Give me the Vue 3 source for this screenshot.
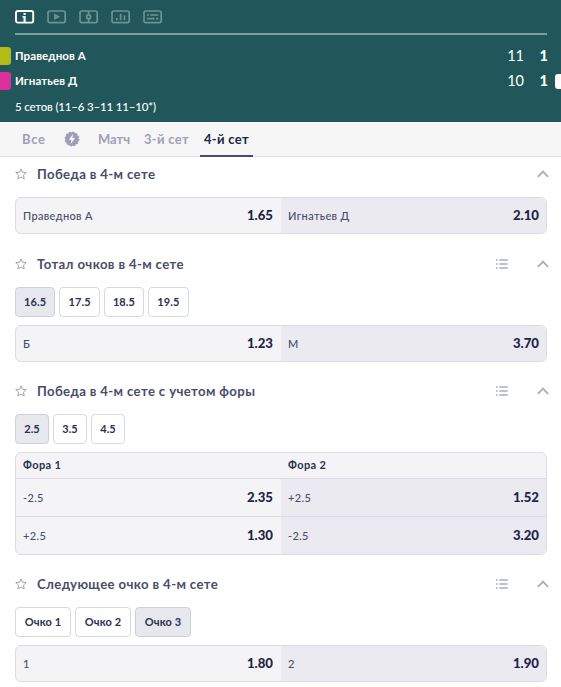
<template>
  <div class="page">
    <header class="board">
      <nav class="views">
        <svg class="view active" viewBox="0 0 20 14">
          <rect x="1" y="1" width="17.2" height="11.6" rx="1.8" />
          <path class="solid" d="M8.5 3h2.2v2.1H8.5zM7.5 6h3.2v6H8.5V7.6h-1z" />
        </svg>
        <svg class="view" viewBox="0 0 20 14">
          <rect x="1" y="1" width="17.2" height="11.6" rx="1.8" />
          <path class="solid" d="M7.1 3.5l6 3.3-6 3.3z" />
        </svg>
        <svg class="view" viewBox="0 0 20 14">
          <rect x="1" y="1" width="17.2" height="11.6" rx="1.8" />
          <circle cx="9.6" cy="6.8" r="2" />
          <path d="M9.6 1v3.8M9.6 8.8v3.8" />
        </svg>
        <svg class="view" viewBox="0 0 20 14">
          <rect x="1" y="1" width="17.2" height="11.6" rx="1.8" />
          <path d="M5.8 8v2.2M9.6 3.8v6.4M13.5 5.6v4.6" />
        </svg>
        <svg class="view" viewBox="0 0 20 14">
          <rect x="1" y="1" width="17.2" height="11.6" rx="1.8" />
          <path d="M4 5h2M7.2 5h8M4 8.6h7.5M13 8.6h2.4" />
        </svg>
      </nav>
      <div v-for="player in players" :key="player.name" class="player">
        <i class="shirt" :class="player.shirt"></i>
        <span class="player-name">{{ player.name }}</span>
        <span class="points">{{ player.points }}</span>
        <b class="sets">{{ player.sets }}</b>
        <i v-if="player.serving" class="serve"></i>
      </div>
      <p class="summary">5 сетов (11–6 3–11 11–10*)</p>
    </header>

    <nav class="tabs">
      <a class="tab all">Все</a>
      <a class="tab fast">
        <svg viewBox="0 0 16 16" width="16" height="16">
          <circle cx="8" cy="8" r="6.7" fill="#9c9eba" />
          <circle cx="8" cy="8" r="6.8" fill="none" stroke="#9c9eba" stroke-width="1.3" stroke-dasharray="2.2 1.36" />
          <path d="M9 2.9L4.8 8.8h2.5l-.5 4.3 4.3-6H8.4z" fill="#f6f6f7" />
        </svg>
      </a>
      <a class="tab match">Матч</a>
      <a class="tab third">3-й сет</a>
      <a class="tab current">4-й сет</a>
    </nav>

    <main>
      <section v-for="market in markets" :key="market.title" class="market">
        <div class="market-head">
          <svg class="star" viewBox="0 0 12 12">
            <path d="M6 .9l1.5 3.3 3.7.4-2.7 2.5.7 3.7L6 9l-3.2 1.8.7-3.7L.8 4.6l3.7-.4z" />
          </svg>
          <h2>{{ market.title }}</h2>
          <svg v-if="market.options" class="list" viewBox="0 0 12 10">
            <path d="M0 1h1.7M3.3 1h8.5M0 5h1.7M3.3 5h8.5M0 9h1.7M3.3 9h8.5" />
          </svg>
          <svg class="chevron" viewBox="0 0 12 8">
            <path d="M.9 6.8L6 1.7l5.1 5.1" />
          </svg>
        </div>
        <div v-if="market.options" class="options" :class="market.kind">
          <button
            v-for="option in market.options"
            :key="option"
            class="option"
            :class="{ selected: option === market.selected }"
          >{{ option }}</button>
        </div>
        <div class="table">
          <div v-if="market.columns" class="columns">
            <span v-for="column in market.columns" :key="column">{{ column }}</span>
          </div>
          <div v-for="(row, index) in market.rows" :key="index" class="row">
            <div v-for="bet in row" :key="bet.label" class="bet">
              <span class="label">{{ bet.label }}</span>
              <b class="odds">{{ bet.odds }}</b>
            </div>
          </div>
        </div>
      </section>
    </main>
  </div>
</template>

<script setup>
const players = [
  { name: "Праведнов А", points: 11, sets: 1, shirt: "olive" },
  { name: "Игнатьев Д", points: 10, sets: 1, shirt: "pink", serving: true },
];

const markets = [
  {
    title: "Победа в 4-м сете",
    kind: "winner",
    rows: [
      [
        { label: "Праведнов А", odds: "1.65" },
        { label: "Игнатьев Д", odds: "2.10" },
      ],
    ],
  },
  {
    title: "Тотал очков в 4-м сете",
    kind: "total",
    options: ["16.5", "17.5", "18.5", "19.5"],
    selected: "16.5",
    rows: [
      [
        { label: "Б", odds: "1.23" },
        { label: "М", odds: "3.70" },
      ],
    ],
  },
  {
    title: "Победа в 4-м сете с учетом форы",
    kind: "handicap",
    options: ["2.5", "3.5", "4.5"],
    selected: "2.5",
    columns: ["Фора 1", "Фора 2"],
    rows: [
      [
        { label: "-2.5", odds: "2.35" },
        { label: "+2.5", odds: "1.52" },
      ],
      [
        { label: "+2.5", odds: "1.30" },
        { label: "-2.5", odds: "3.20" },
      ],
    ],
  },
  {
    title: "Следующее очко в 4-м сете",
    kind: "point",
    options: ["Очко 1", "Очко 2", "Очко 3"],
    selected: "Очко 3",
    rows: [
      [
        { label: "1", odds: "1.80" },
        { label: "2", odds: "1.90" },
      ],
    ],
  },
];
</script>

<style>
body {
  background: #fff;
}
</style>

<style scoped>
.page {
  height: 687px;
  overflow: hidden;
  font-family: Lato, Inter, "Liberation Sans", sans-serif;
  color: #1f2445;
}

.page * {
  box-sizing: border-box;
}

.board {
  height: 122px;
  background: #21575a;
  color: #fff;
  overflow: hidden;
}

.views {
  display: flex;
  gap: 12px;
  height: 35px;
  margin: 0 14px 8px 15px;
  padding-top: 10px;
  border-bottom: 2px solid #7c9fa0;
}

.view {
  width: 20px;
  height: 14px;
  fill: none;
  stroke: #6b9495;
  stroke-width: 1.7;
}

.view .solid {
  fill: #6b9495;
  stroke: none;
}

.view.active {
  stroke: #fff;
  stroke-width: 1.9;
}

.view.active .solid {
  fill: #fff;
}

.player {
  display: flex;
  align-items: center;
  height: 25px;
  position: relative;
  font-weight: 700;
}

.shirt {
  width: 11px;
  height: 18px;
  margin-right: 4px;
  border-radius: 0 3px 3px 0;
}

.olive {
  background: #b3bb1b;
}

.pink {
  background: #dc2f9c;
}

.player-name {
  flex: 1;
  font-size: 11.5px;
  letter-spacing: 0.1px;
}

.points {
  width: 30px;
  margin-right: 10px;
  text-align: right;
  font-size: 14.5px;
  font-weight: 400;
}

.sets {
  width: 14px;
  margin-right: 13px;
  text-align: right;
  font-size: 14.5px;
  font-weight: 900;
}

.serve {
  position: absolute;
  right: 0;
  top: 6px;
  width: 6.5px;
  height: 15px;
  border-radius: 3px 0 0 3px;
  background: #fff;
}

.summary {
  margin: 6px 0 0 15px;
  font-size: 11.5px;
  line-height: 15px;
  font-weight: 500;
  letter-spacing: -0.17px;
}

.tabs {
  display: flex;
  height: 35px;
  padding-left: 22px;
  background: #f6f6f7;
  border-bottom: 1px solid #dedfe5;
  font-size: 13px;
  font-weight: 700;
  letter-spacing: 0.3px;
  line-height: 35px;
  color: #9fa0b8;
  white-space: nowrap;
}

.tab.all {
  width: 42px;
  letter-spacing: 0.7px;
}

.tab.fast {
  width: 34px;
}

.fast svg {
  display: block;
  margin-top: 9px;
}

.tab.match {
  width: 46px;
  letter-spacing: 0;
}

.tab.third {
  width: 56px;
}

.tab.current {
  width: 53px;
  height: 35px;
  padding-left: 4px;
  border-bottom: 2px solid #4b4871;
  color: #1f2445;
}

.market + .market {
  margin-top: 12px;
}

.market:nth-child(2) {
  margin-top: 13px;
}

.market-head {
  display: flex;
  align-items: center;
  height: 34px;
  margin-bottom: 6px;
  padding: 0 12px 0 15px;
}

.star {
  width: 12px;
  height: 12px;
  fill: none;
  stroke: #9597ab;
  stroke-width: 0.9;
  stroke-linejoin: round;
}

h2 {
  flex: 1;
  margin: 0 0 0 10px;
  font-size: 13.2px;
  line-height: 18px;
  letter-spacing: 0.36px;
  color: #484d68;
}

.list {
  width: 12px;
  height: 10px;
  margin-right: 29px;
  stroke: #abadc0;
  stroke-width: 1.5;
}

.chevron {
  width: 12px;
  height: 8px;
  fill: none;
  stroke: #abadb9;
  stroke-width: 1.9;
}

.options {
  display: flex;
  gap: 4px;
  margin: 0 15px 8px;
}

.option {
  width: 34px;
  height: 30px;
  padding: 0 0 1px;
  border: 1px solid #d6d8e2;
  border-radius: 4px;
  background: #fff;
  font: 700 11px Lato, Inter, "Liberation Sans", sans-serif;
  letter-spacing: 0.1px;
  color: #2b3050;
}

.total .option {
  width: 40.4px;
}

.point .option {
  width: 56px;
}

.option.selected {
  background: #e7e8ed;
  border-color: #cfd1da;
}

.table {
  margin: 0 14px 0 15px;
  border: 1px solid #dcdce7;
  border-radius: 6px;
  background: #f4f4f7;
  overflow: hidden;
}

.columns {
  display: flex;
  height: 25px;
  font-size: 11px;
  font-weight: 700;
  letter-spacing: 0.4px;
  line-height: 24px;
  color: #2b3050;
}

.columns span {
  width: 50%;
  padding-left: 7px;
}

.row {
  display: flex;
  height: 35px;
}

.columns ~ .row {
  height: 38px;
  border-top: 1px solid #dcdce7;
}

.bet {
  display: flex;
  align-items: center;
  justify-content: space-between;
  width: 50%;
  padding: 0 7px 1px;
}

.bet:first-child {
  padding: 0 8px 1px 7px;
}

.bet + .bet {
  background: #ebeaf1;
}

.label {
  font-size: 11px;
  font-weight: 500;
  letter-spacing: 0.35px;
  color: #484d68;
}

.odds {
  font-size: 13.2px;
  font-weight: 900;
}
</style>
